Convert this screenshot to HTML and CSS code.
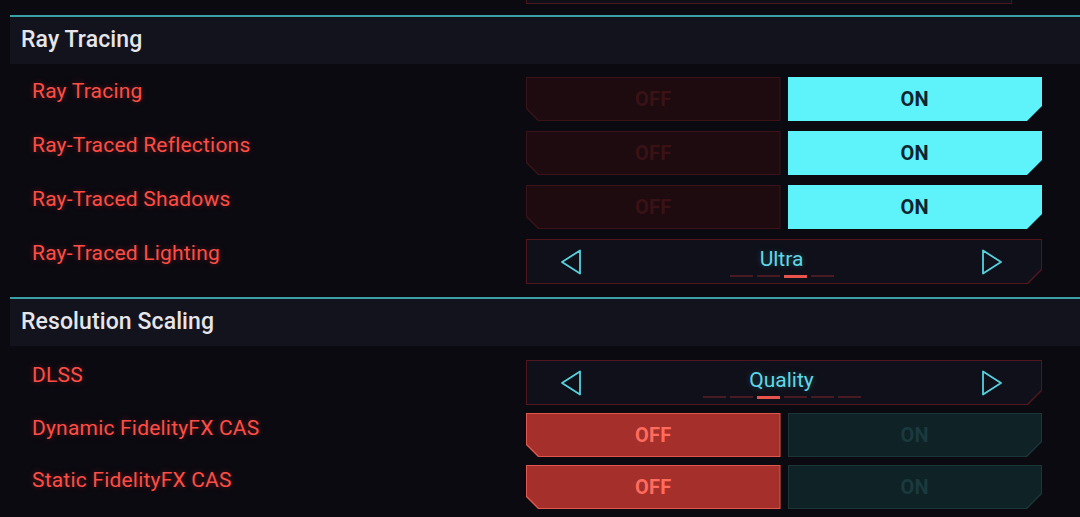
FILE: index.html
```html
<!DOCTYPE html>
<html lang="en">
<head>
  <meta charset="UTF-8">
  <title>Graphics - Ray Tracing</title>
  <link rel="stylesheet" href="styles.css">
</head>
<body>
  <div class="settings">
    <!-- end of the previous group, cut off by the scroll -->
    <div class="prev-row">
      <div class="prev-ctrl"></div>
    </div>

    <div class="section">
      <div class="section-title">Ray Tracing</div>
      <div class="rows">
        <div class="row">
          <div class="label">Ray Tracing</div>
          <div class="toggle">
            <div class="btn off dim"><div class="btn-fill">OFF</div></div>
            <div class="btn on lit"><div class="btn-fill">ON</div></div>
          </div>
        </div>
        <div class="row">
          <div class="label">Ray-Traced Reflections</div>
          <div class="toggle">
            <div class="btn off dim"><div class="btn-fill">OFF</div></div>
            <div class="btn on lit"><div class="btn-fill">ON</div></div>
          </div>
        </div>
        <div class="row">
          <div class="label">Ray-Traced Shadows</div>
          <div class="toggle">
            <div class="btn off dim"><div class="btn-fill">OFF</div></div>
            <div class="btn on lit"><div class="btn-fill">ON</div></div>
          </div>
        </div>
        <div class="row">
          <div class="label">Ray-Traced Lighting</div>
          <div class="select">
            <div class="select-fill">
              <svg class="arrow" viewBox="0 0 24 26"><path d="M21 1.5 L3 13 L21 24.5 Z"/></svg>
              <div class="select-mid">
                <div class="select-value">Ultra</div>
                <div class="steps">
                  <span></span><span></span><span class="cur"></span><span></span>
                </div>
              </div>
              <svg class="arrow" viewBox="0 0 24 26"><path d="M3 1.5 L21 13 L3 24.5 Z"/></svg>
            </div>
          </div>
        </div>
      </div>
    </div>

    <div class="section">
      <div class="section-title">Resolution Scaling</div>
      <div class="rows tight">
        <div class="row">
          <div class="label">DLSS</div>
          <div class="select">
            <div class="select-fill">
              <svg class="arrow" viewBox="0 0 24 26"><path d="M21 1.5 L3 13 L21 24.5 Z"/></svg>
              <div class="select-mid">
                <div class="select-value">Quality</div>
                <div class="steps">
                  <span></span><span></span><span class="cur"></span><span></span><span></span><span></span>
                </div>
              </div>
              <svg class="arrow" viewBox="0 0 24 26"><path d="M3 1.5 L21 13 L3 24.5 Z"/></svg>
            </div>
          </div>
        </div>
        <div class="row">
          <div class="label">Dynamic FidelityFX CAS</div>
          <div class="toggle">
            <div class="btn off red"><div class="btn-fill">OFF</div></div>
            <div class="btn on teal"><div class="btn-fill">ON</div></div>
          </div>
        </div>
        <div class="row">
          <div class="label">Static FidelityFX CAS</div>
          <div class="toggle">
            <div class="btn off red"><div class="btn-fill">OFF</div></div>
            <div class="btn on teal"><div class="btn-fill">ON</div></div>
          </div>
        </div>
      </div>
    </div>
  </div>
</body>
</html>
```

FILE: styles.css
```css
body {
  margin: 0;
  background-color: #0b0a11;
  font-family: Roboto, "Noto Sans", sans-serif;
  overflow: hidden;
}
.settings {
  padding-left: 10px;
}
.prev-row {
  height: 15px;
  padding-left: 516px;
}
.prev-ctrl {
  width: 484px;
  height: 3px;
  border: 1px solid #4a1620;
  border-top: none;
  background-color: #0f0f18;
}
.section {
  border-top: 2px solid #3aa0a6;
}
.section-title {
  height: 47px;
  line-height: 46px;
  padding-left: 11px;
  background-color: #12131c;
  color: #e6e6ea;
  font-size: 23px;
  font-weight: 500;
  letter-spacing: 0.1px;
}
.rows {
  display: flex;
  flex-direction: column;
  gap: 10px;
  padding: 13px 0 13px;
}
.rows.tight {
  padding-top: 14px;
  gap: 8px;
}
.row {
  display: flex;
  align-items: center;
  height: 44px;
}
.row:has(.select) {
  height: 45px;
}
.label {
  width: 516px;
  padding-left: 22px;
  box-sizing: border-box;
  align-self: flex-start;
  margin-top: 2px;
  color: #ff4d45;
  font-size: 21px;
  letter-spacing: 0.2px;
  text-shadow: 0 0 6px rgba(255, 60, 50, 0.35);
}
.rows.tight .label {
  margin-top: 3px;
}
.toggle {
  display: flex;
  gap: 7px;
  width: 516px;
  height: 44px;
}
.btn {
  flex: 1;
  padding: 1px;
}
.btn-fill {
  height: 100%;
  display: flex;
  align-items: center;
  justify-content: center;
  font-size: 20px;
  font-weight: bold;
  letter-spacing: 0.3px;
}
.btn.off,
.btn.off .btn-fill {
  clip-path: polygon(0 0, 100% 0, 100% 100%, 12px 100%, 0 calc(100% - 12px));
}
.btn.on,
.btn.on .btn-fill {
  clip-path: polygon(0 0, 100% 0, 100% calc(100% - 15px), calc(100% - 15px) 100%, 0 100%);
}
.btn.dim {
  background-color: #3a1319;
}
.btn.dim .btn-fill {
  background-color: #1d0b10;
  color: #3a1216;
}
.btn.lit {
  background-color: #5ef2fa;
}
.btn.lit .btn-fill {
  background-color: #5ef2fa;
  color: #0e2530;
}
.btn.red {
  background-color: #e2564c;
}
.btn.red .btn-fill {
  background-color: #a52f2b;
  color: #ff6b5d;
}
.btn.teal {
  background-color: #1b3539;
}
.btn.teal .btn-fill {
  background-color: #0f2226;
  color: #1a3a3e;
}
.select {
  width: 516px;
  height: 45px;
  padding: 1px;
  box-sizing: border-box;
  background-color: #52161f;
}
.select,
.select-fill {
  clip-path: polygon(0 0, 100% 0, 100% calc(100% - 14px), calc(100% - 14px) 100%, 0 100%);
}
.select-fill {
  height: 100%;
  background-color: #0f1019;
  display: flex;
  align-items: center;
  justify-content: space-between;
  padding: 0 37px 0 32px;
}
.arrow {
  width: 24px;
  height: 26px;
  fill: none;
  stroke: #56d2df;
  stroke-width: 1.8;
  stroke-linejoin: round;
}
.select-mid {
  display: flex;
  flex-direction: column;
  align-items: center;
  gap: 4px;
  padding-top: 2px;
}
.select-value {
  color: #5fd8e6;
  font-size: 21px;
  line-height: 24px;
  text-shadow: 0 0 6px rgba(80, 210, 230, 0.3);
}
.steps {
  display: flex;
  gap: 4px;
}
.steps span {
  width: 23px;
  height: 2px;
  background-color: #4a1a22;
}
.steps span.cur {
  height: 3px;
  background-color: #e8544c;
}
```
